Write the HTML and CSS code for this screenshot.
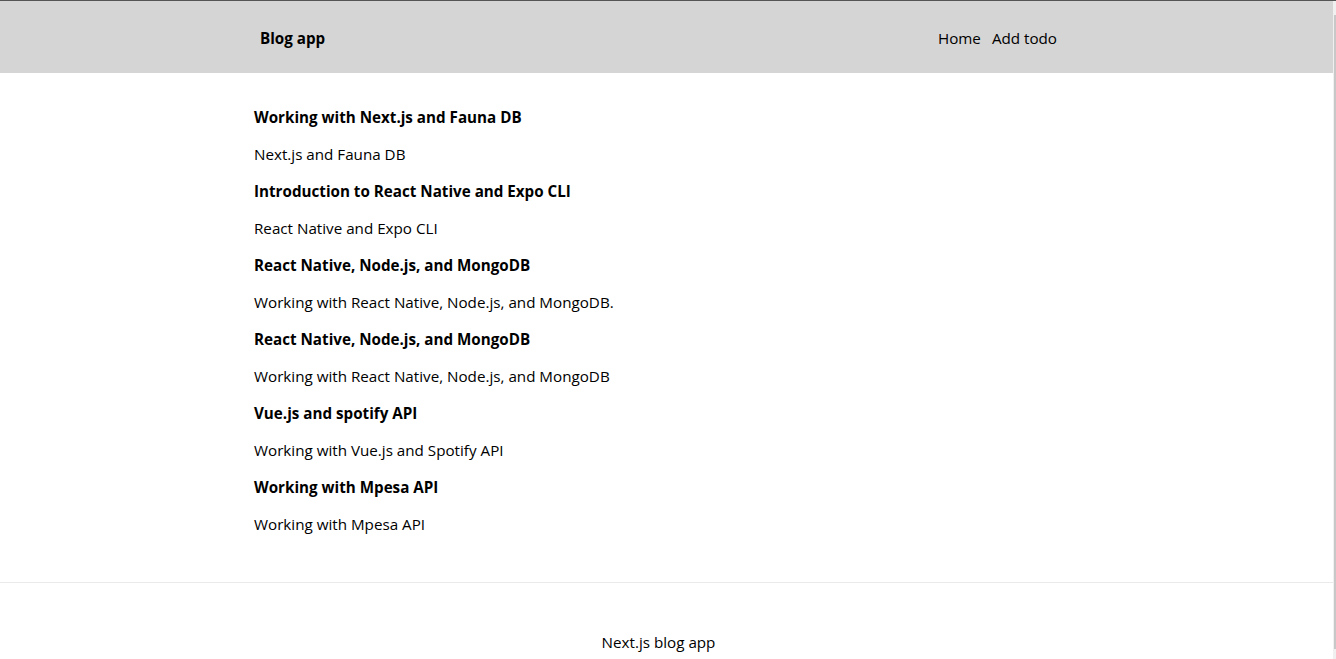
FILE: index.html
```html
<!DOCTYPE html>
<html lang="en">
<head>
<meta charset="utf-8">
<title>Blog app</title>
<link rel="stylesheet" href="styles.css">
</head>
<body>
<div class="page">
  <header class="header">
    <div class="brand">Blog app</div>
    <nav class="nav">
      <a href="#">Home</a>
      <a href="#">Add todo</a>
    </nav>
  </header>
  <main class="main">
    <div class="post">
      <p class="title">Working with Next.js and Fauna DB</p>
      <p class="desc">Next.js and Fauna DB</p>
    </div>
    <div class="post">
      <p class="title">Introduction to React Native and Expo CLI</p>
      <p class="desc">React Native and Expo CLI</p>
    </div>
    <div class="post">
      <p class="title">React Native, Node.js, and MongoDB</p>
      <p class="desc">Working with React Native, Node.js, and MongoDB.</p>
    </div>
    <div class="post">
      <p class="title">React Native, Node.js, and MongoDB</p>
      <p class="desc">Working with React Native, Node.js, and MongoDB</p>
    </div>
    <div class="post">
      <p class="title">Vue.js and spotify API</p>
      <p class="desc">Working with Vue.js and Spotify API</p>
    </div>
    <div class="post">
      <p class="title">Working with Mpesa API</p>
      <p class="desc">Working with Mpesa API</p>
    </div>
  </main>
  <footer class="footer">Next.js blog app</footer>
</div>
<div class="scrollbar"><div class="thumb"></div></div>
</body>
</html>
```
FILE: styles.css
```css
html, body {
  margin: 0;
  padding: 0;
}
body {
  font-family: "Open Sans", "Noto Sans", sans-serif;
  font-size: 15.2px;
  color: #000;
  background: #fff;
  border-top: 1px solid #555;
  height: 658px;
  overflow: hidden;
  display: flex;
}
.page {
  flex: 1;
}
.scrollbar {
  width: 3px;
  background: #f0f0f0;
  display: flex;
  justify-content: flex-end;
  padding: 14px 0 10px;
}
.thumb {
  width: 2px;
  background: #c8c8c8;
}
.header {
  background: #d5d5d5;
  height: 72px;
  box-sizing: border-box;
  padding: 2px 276px 0 260px;
  display: flex;
  align-items: center;
  justify-content: space-between;
}
.brand {
  font-weight: 700;
}
.nav {
  display: flex;
  gap: 11px;
}
.nav a {
  color: #000;
  text-decoration: none;
}
.main {
  padding: 34px 0 47px 254px;
  display: flex;
  flex-direction: column;
  gap: 16px;
}
.post {
  display: flex;
  flex-direction: column;
  gap: 16px;
}
.post p {
  margin: 0;
  line-height: 21px;
}
.title {
  font-weight: 700;
}
.footer {
  border-top: 1px solid #eaeaea;
  display: flex;
  justify-content: center;
  padding: 49px 16px 0 0;
  line-height: 21px;
}
```
